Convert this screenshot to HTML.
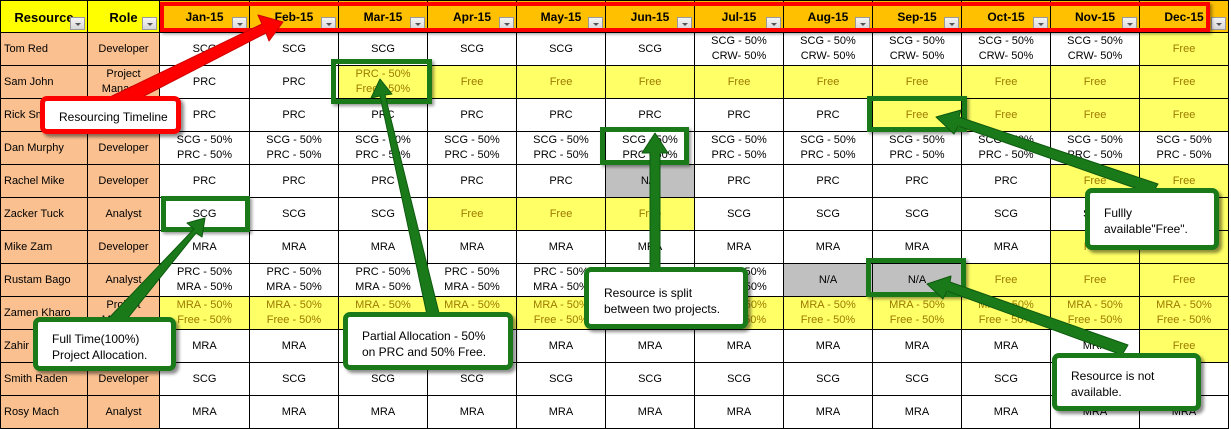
<!DOCTYPE html>
<html><head><meta charset="utf-8"><style>
body{margin:0;width:1231px;height:427px;overflow:hidden;background:#fff;position:relative;font-family:"Liberation Sans",Arial,sans-serif}
table{position:absolute;left:0;top:0;border-collapse:collapse;table-layout:fixed;width:1229px}
td{border:1px solid #000;padding:0;text-align:center;font-size:11px;line-height:15px;height:32px;color:#000;overflow:hidden;white-space:nowrap}
tr.h td{font-weight:bold;font-size:12px;background:#FFC000;position:relative;vertical-align:top;padding-top:9px;height:22px}
tr.h td.y{background:#FFFF00;font-size:13px}
td.r{background:#FAC090;text-align:left;padding-left:3px}
td.ro{background:#FAC090}
td.f{background:#FFFF66;color:#9C7A00}
td.g{background:#C0C0C0}
.dd{position:absolute;right:2px;bottom:2px;width:15px;height:13px;background:linear-gradient(#f4f4f4,#d8d8d8);border:1px solid #999;box-sizing:border-box}
.dd:after{content:"";position:absolute;left:4px;top:5px;border-left:3px solid transparent;border-right:3px solid transparent;border-top:3px solid #555}
.box{position:absolute;background:#fff;border-radius:7px;font-size:12px;line-height:16px;color:#000;box-shadow:3px 3px 3px rgba(0,0,0,.45);box-sizing:border-box;padding:11px 0 0 14px}
.gb{border:5px solid #1A7A1A}
.rb{border:5px solid #F00}
.rect{position:absolute;box-sizing:border-box;box-shadow:2px 2px 3px rgba(0,0,0,.4)}
svg{position:absolute;left:0;top:0}
</style></head><body>
<table>
<colgroup><col style="width:87px"><col style="width:72px"><col style="width:90px"><col style="width:89px"><col style="width:89px"><col style="width:89px"><col style="width:89px"><col style="width:89px"><col style="width:89px"><col style="width:89px"><col style="width:89px"><col style="width:89px"><col style="width:89px"><col style="width:89px"></colgroup>
<tr class="h"><td class="y">Resource<span class="dd"></span></td><td class="y">Role<span class="dd"></span></td><td>Jan-15<span class="dd"></span></td><td>Feb-15<span class="dd"></span></td><td>Mar-15<span class="dd"></span></td><td>Apr-15<span class="dd"></span></td><td>May-15<span class="dd"></span></td><td>Jun-15<span class="dd"></span></td><td>Jul-15<span class="dd"></span></td><td>Aug-15<span class="dd"></span></td><td>Sep-15<span class="dd"></span></td><td>Oct-15<span class="dd"></span></td><td>Nov-15<span class="dd"></span></td><td>Dec-15<span class="dd"></span></td></tr>
<tr><td class="r">Tom Red</td><td class="ro">Developer</td><td>SCG</td><td>SCG</td><td>SCG</td><td>SCG</td><td>SCG</td><td>SCG</td><td>SCG - 50%<br>CRW- 50%</td><td>SCG - 50%<br>CRW- 50%</td><td>SCG - 50%<br>CRW- 50%</td><td>SCG - 50%<br>CRW- 50%</td><td>SCG - 50%<br>CRW- 50%</td><td class="f">Free</td></tr>
<tr><td class="r">Sam John</td><td class="ro">Project<br>Manager</td><td>PRC</td><td>PRC</td><td class="f">PRC - 50%<br>Free - 50%</td><td class="f">Free</td><td class="f">Free</td><td class="f">Free</td><td class="f">Free</td><td class="f">Free</td><td class="f">Free</td><td class="f">Free</td><td class="f">Free</td><td class="f">Free</td></tr>
<tr><td class="r">Rick Smith</td><td class="ro">Developer</td><td>PRC</td><td>PRC</td><td>PRC</td><td>PRC</td><td>PRC</td><td>PRC</td><td>PRC</td><td>PRC</td><td class="f">Free</td><td class="f">Free</td><td class="f">Free</td><td class="f">Free</td></tr>
<tr><td class="r">Dan Murphy</td><td class="ro">Developer</td><td>SCG - 50%<br>PRC - 50%</td><td>SCG - 50%<br>PRC - 50%</td><td>SCG - 50%<br>PRC - 50%</td><td>SCG - 50%<br>PRC - 50%</td><td>SCG - 50%<br>PRC - 50%</td><td>SCG - 50%<br>PRC - 50%</td><td>SCG - 50%<br>PRC - 50%</td><td>SCG - 50%<br>PRC - 50%</td><td>SCG - 50%<br>PRC - 50%</td><td>SCG - 50%<br>PRC - 50%</td><td>SCG - 50%<br>PRC - 50%</td><td>SCG - 50%<br>PRC - 50%</td></tr>
<tr><td class="r">Rachel Mike</td><td class="ro">Developer</td><td>PRC</td><td>PRC</td><td>PRC</td><td>PRC</td><td>PRC</td><td class="g">N/A</td><td>PRC</td><td>PRC</td><td>PRC</td><td>PRC</td><td class="f">Free</td><td class="f">Free</td></tr>
<tr><td class="r">Zacker Tuck</td><td class="ro">Analyst</td><td>SCG</td><td>SCG</td><td>SCG</td><td class="f">Free</td><td class="f">Free</td><td class="f">Free</td><td>SCG</td><td>SCG</td><td>SCG</td><td>SCG</td><td>SCG</td><td class="f">Free</td></tr>
<tr><td class="r">Mike Zam</td><td class="ro">Developer</td><td>MRA</td><td>MRA</td><td>MRA</td><td>MRA</td><td>MRA</td><td>MRA</td><td>MRA</td><td>MRA</td><td>MRA</td><td>MRA</td><td class="f">Free</td><td class="f">Free</td></tr>
<tr><td class="r">Rustam Bago</td><td class="ro">Analyst</td><td>PRC - 50%<br>MRA - 50%</td><td>PRC - 50%<br>MRA - 50%</td><td>PRC - 50%<br>MRA - 50%</td><td>PRC - 50%<br>MRA - 50%</td><td>PRC - 50%<br>MRA - 50%</td><td>PRC - 50%<br>MRA - 50%</td><td>PRC - 50%<br>MRA - 50%</td><td class="g">N/A</td><td class="g">N/A</td><td class="f">Free</td><td class="f">Free</td><td class="f">Free</td></tr>
<tr><td class="r">Zamen Kharo</td><td class="ro">Project<br>Manager</td><td class="f">MRA - 50%<br>Free - 50%</td><td class="f">MRA - 50%<br>Free - 50%</td><td class="f">MRA - 50%<br>Free - 50%</td><td class="f">MRA - 50%<br>Free - 50%</td><td class="f">MRA - 50%<br>Free - 50%</td><td class="f">MRA - 50%<br>Free - 50%</td><td class="f">MRA - 50%<br>Free - 50%</td><td class="f">MRA - 50%<br>Free - 50%</td><td class="f">MRA - 50%<br>Free - 50%</td><td class="f">MRA - 50%<br>Free - 50%</td><td class="f">MRA - 50%<br>Free - 50%</td><td class="f">MRA - 50%<br>Free - 50%</td></tr>
<tr><td class="r">Zahir Khan</td><td class="ro">Analyst</td><td>MRA</td><td>MRA</td><td>MRA</td><td>MRA</td><td>MRA</td><td>MRA</td><td>MRA</td><td>MRA</td><td>MRA</td><td>MRA</td><td>MRA</td><td class="f">Free</td></tr>
<tr><td class="r">Smith Raden</td><td class="ro">Developer</td><td>SCG</td><td>SCG</td><td>SCG</td><td>SCG</td><td>SCG</td><td>SCG</td><td>SCG</td><td>SCG</td><td>SCG</td><td>SCG</td><td>SCG</td><td>SCG</td></tr>
<tr><td class="r">Rosy Mach</td><td class="ro">Analyst</td><td>MRA</td><td>MRA</td><td>MRA</td><td>MRA</td><td>MRA</td><td>MRA</td><td>MRA</td><td>MRA</td><td>MRA</td><td>MRA</td><td>MRA</td><td>MRA</td></tr>
</table>

<div class="rect" style="left:160px;top:2px;width:1050px;height:30px;border:4px solid #F00"></div>
<div class="rect" style="left:331px;top:59px;width:101px;height:45px;border:5px solid #1A7A1A"></div>
<div class="rect" style="left:161px;top:196px;width:89px;height:36px;border:5px solid #1A7A1A"></div>
<div class="rect" style="left:600px;top:127px;width:89px;height:38px;border:5px solid #1A7A1A"></div>
<div class="rect" style="left:867px;top:96px;width:100px;height:36px;border:5px solid #1A7A1A"></div>
<div class="rect" style="left:866px;top:258px;width:100px;height:39px;border:5px solid #1A7A1A"></div>

<svg width="1231" height="427">
<g stroke-linejoin="round">
<polygon points="110,97 262,24 258,15 283,22 269,41 266,33 119,109" fill="#F00" stroke="#C00" stroke-width="1"/>
<polygon points="107,320 194,229 187,223 205,218 202,237 196,233 119,329" fill="#1A7A1A" stroke="#0E5A0E" stroke-width="1"/>
<polygon points="427,315 380,96 371,98 380,79 392,94 385,95 439,313" fill="#1A7A1A" stroke="#0E5A0E" stroke-width="1"/>
<polygon points="650,268 650,153 642,153 655,133 668,153 660,153 660,268" fill="#1A7A1A" stroke="#0E5A0E" stroke-width="1"/>
<polygon points="1152,194 958,126 954,134 936,117 961,110 959,117 1158,184" fill="#1A7A1A" stroke="#0E5A0E" stroke-width="1"/>
<polygon points="1122,355 947,291 943,299 927,284 951,276 950,282 1128,345" fill="#1A7A1A" stroke="#0E5A0E" stroke-width="1"/>
</g>
</svg>

<div class="box rb" style="left:40px;top:96px;width:141px;height:38px;padding:8px 0 0 14px">Resourcing Timeline</div>
<div class="box gb" style="left:33px;top:317px;width:143px;height:54px;padding:9px 0 0 14px">Full Time(100%)<br>Project Allocation.</div>
<div class="box gb" style="left:343px;top:312px;width:170px;height:58px;padding:11px 0 0 14px">Partial Allocation - 50%<br>on PRC and 50% Free.</div>
<div class="box gb" style="left:584px;top:267px;width:164px;height:62px;padding:13px 0 0 15px">Resource is split<br>between two projects.</div>
<div class="box gb" style="left:1085px;top:188px;width:134px;height:62px;padding:12px 0 0 14px">Fullly<br>available"Free".</div>
<div class="box gb" style="left:1052px;top:353px;width:149px;height:58px;padding:10px 0 0 14px">Resource is not<br>available.</div>
</body></html>
